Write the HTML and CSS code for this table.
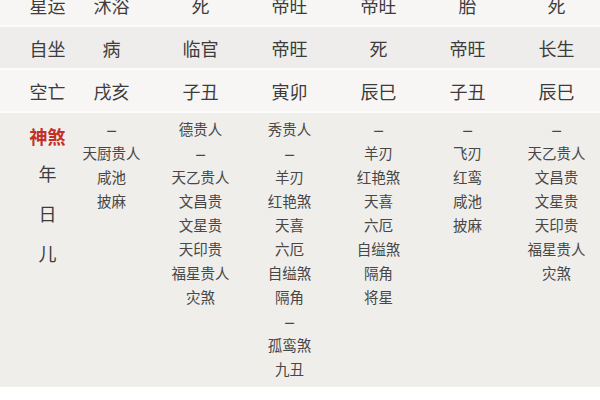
FILE: index.html
```html
<!DOCTYPE html>
<html lang="zh">
<head>
<meta charset="utf-8">
<link rel="stylesheet" href="styles.css">
</head>
<body>
<div class="table">
  <div class="row light">
    <div class="label">星运</div>
    <div class="cell">沐浴</div><div class="cell">死</div><div class="cell">帝旺</div><div class="cell">帝旺</div><div class="cell">胎</div><div class="cell">死</div>
  </div>
  <div class="row dark">
    <div class="label">自坐</div>
    <div class="cell">病</div><div class="cell">临官</div><div class="cell">帝旺</div><div class="cell">死</div><div class="cell">帝旺</div><div class="cell">长生</div>
  </div>
  <div class="row light">
    <div class="label">空亡</div>
    <div class="cell">戌亥</div><div class="cell">子丑</div><div class="cell">寅卯</div><div class="cell">辰巳</div><div class="cell">子丑</div><div class="cell">辰巳</div>
  </div>
  <div class="shensha">
    <div class="ss-label">
      <div class="ss-title">神煞</div>
      <div class="ss-char">年</div>
      <div class="ss-char">日</div>
      <div class="ss-char">儿</div>
    </div>
    <div class="ss-col">
      <div class="dash">–</div><div>天厨贵人</div><div>咸池</div><div>披麻</div>
    </div>
    <div class="ss-col">
      <div>德贵人</div><div class="dash">–</div><div>天乙贵人</div><div>文昌贵</div><div>文星贵</div><div>天印贵</div><div>福星贵人</div><div>灾煞</div>
    </div>
    <div class="ss-col">
      <div>秀贵人</div><div class="dash">–</div><div>羊刃</div><div>红艳煞</div><div>天喜</div><div>六厄</div><div>自缢煞</div><div>隔角</div><div class="dash">–</div><div>孤鸾煞</div><div>九丑</div>
    </div>
    <div class="ss-col">
      <div class="dash">–</div><div>羊刃</div><div>红艳煞</div><div>天喜</div><div>六厄</div><div>自缢煞</div><div>隔角</div><div>将星</div>
    </div>
    <div class="ss-col">
      <div class="dash">–</div><div>飞刃</div><div>红鸾</div><div>咸池</div><div>披麻</div>
    </div>
    <div class="ss-col">
      <div class="dash">–</div><div>天乙贵人</div><div>文昌贵</div><div>文星贵</div><div>天印贵</div><div>福星贵人</div><div>灾煞</div>
    </div>
  </div>
</div>
</body>
</html>
```
FILE: styles.css
```css
html, body {
  margin: 0;
  padding: 0;
  background: #ffffff;
  width: 600px;
  height: 400px;
  overflow: hidden;
  font-family: "Noto Sans CJK SC", "Noto Sans", sans-serif;
}

.table {
  margin-top: -15px;
  display: flex;
  flex-direction: column;
  gap: 2px;
  background: #fbfbfa;
  width: 600px;
}

.row {
  display: grid;
  grid-template-columns: 67px repeat(6, 89px);
  height: 41px;
  align-items: center;
  font-size: 18px;
  color: #3c3c3c;
}

.row:first-child { height: 40px; }

.row.light { background: #f7f6f4; }
.row.dark { background: #eeedeb; }

.label {
  padding-left: 28px;
  text-align: center;
  white-space: nowrap;
}

.cell {
  text-align: center;
  white-space: nowrap;
}

.shensha {
  display: grid;
  grid-template-columns: 67px repeat(6, 89px);
  background: #efeeeb;
  padding: 4px 0 5px;
  height: 274px;
  box-sizing: border-box;
}

.ss-label {
  padding-left: 28px;
  display: flex;
  flex-direction: column;
  align-items: center;
}

.ss-title {
  margin-top: 2px;
  line-height: 34px;
  font-size: 18px;
  font-weight: 700;
  color: #c3302a;
}

.ss-char {
  line-height: 40px;
  font-size: 18px;
  color: #3c3c3c;
}

.ss-col {
  display: flex;
  flex-direction: column;
  align-items: center;
  font-size: 14.5px;
  line-height: 24px;
  color: #474747;
  white-space: nowrap;
}

.ss-col .dash {
  font-size: 20px;
  line-height: 24px;
  height: 24px;
}
```
